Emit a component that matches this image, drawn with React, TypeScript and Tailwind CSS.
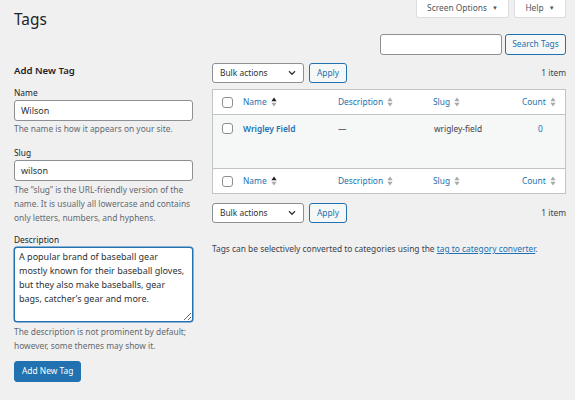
import React from 'react';

const font = "font-['Noto_Sans','Open_Sans',sans-serif]";

function SortIcon({ active }: { active?: boolean }) {
    return (
        <svg width="6" height="10" viewBox="0 0 6 10" className="ml-[4px] shrink-0">
            <path d="M3 0.5L5.6 4.2H0.4Z" fill={active ? '#1d2327' : '#a7aaad'} />
            <path d="M3 9.5L5.6 5.8H0.4Z" fill="#a7aaad" />
        </svg>
    );
}

function Checkbox() {
    return <span className="block w-[11px] h-[11px] bg-white border border-[#8c8f94] rounded-[3px]" />;
}

function BulkBar() {
    return (
        <div className="flex items-center h-[20px]">
            <div className="flex items-center justify-between w-[92px] h-[20px] pl-[7px] pr-[7px] bg-white border border-[#8c8f94] rounded-[3px] text-[#2c3338]">
                <span>Bulk actions</span>
                <svg width="8" height="6" viewBox="0 0 8 6">
                    <path d="M1 1.3L4 4.3L7 1.3" fill="none" stroke="#2c3338" strokeWidth="1.3" />
                </svg>
            </div>
            <button className="ml-[5px] h-[20px] w-[38px] bg-[#f6f7f7] border border-[#2271b1] rounded-[3px] text-[#2271b1]">
                Apply
            </button>
            <span className="ml-auto text-[#3c434a]">1 item</span>
        </div>
    );
}

function HeadRow({ footer }: { footer?: boolean }) {
    return (
        <div
            className={`grid grid-cols-[30px_95px_95px_89px_1fr] items-center h-[25px] bg-white ${
                footer ? 'border-t border-[#c3c4c7]' : 'border-b border-[#c3c4c7]'
            }`}
        >
            <div className="pl-[9px]">
                <Checkbox />
            </div>
            <div className="flex items-center text-[#2271b1]">
                Name
                <SortIcon active />
            </div>
            <div className="flex items-center text-[#2271b1]">
                Description
                <SortIcon />
            </div>
            <div className="flex items-center text-[#2271b1]">
                Slug
                <SortIcon />
            </div>
            <div className="flex items-center text-[#2271b1]">
                Count
                <SortIcon />
            </div>
        </div>
    );
}

export default function App() {
    return (
        <div className={`min-h-screen bg-[#f0f0f1] text-[#3c434a] text-[8.4px] ${font}`}>
            {/* Header */}
            <div className="flex h-[34px] pl-[14px] pr-[9px]">
                <h1 className="mt-[9px] text-[15.4px] leading-[22px] text-[#1d2327]">Tags</h1>
                <div className="ml-auto flex gap-[5px]">
                    <button className="flex items-center h-[18px] w-[93px] justify-center gap-[5px] bg-white border border-t-0 border-[#dcdcde] rounded-b-[3px] text-[#50575e]">
                        Screen Options
                        <span className="text-[6px]">▼</span>
                    </button>
                    <button className="flex items-center h-[18px] w-[52px] justify-center gap-[5px] bg-white border border-t-0 border-[#dcdcde] rounded-b-[3px] text-[#50575e]">
                        Help
                        <span className="text-[6px]">▼</span>
                    </button>
                </div>
            </div>

            <div className="flex pl-[14px] pr-[9px]">
                {/* Left column: add form */}
                <div className="w-[179px] shrink-0">
                    <h2 className="mt-[29px] text-[9.6px] leading-[16px] font-semibold text-[#1d2327]">Add New Tag</h2>

                    <label className="block mt-[7px] leading-[14px] text-[#1d2327]">Name</label>
                    <div className="h-[21px] flex items-center px-[6px] bg-white border border-[#8c8f94] rounded-[3px] text-[9px] text-[#2c3338]">
                        Wilson
                    </div>
                    <p className="mt-[1px] leading-[14px] text-[#646970]">The name is how it appears on your site.</p>

                    <label className="block mt-[10px] leading-[14px] text-[#1d2327]">Slug</label>
                    <div className="h-[21px] flex items-center px-[6px] bg-white border border-[#8c8f94] rounded-[3px] text-[9px] text-[#2c3338]">
                        wilson
                    </div>
                    <p className="mt-[2px] leading-[14px] text-[#646970]">
                        The “slug” is the URL-friendly version of the name. It is usually all lowercase and contains only
                        letters, numbers, and hyphens.
                    </p>

                    <label className="block mt-[8px] leading-[14px] text-[#1d2327]">Description</label>
                    <textarea
                        readOnly
                        className="block w-full h-[75px] px-[4px] pt-[2px] text-[9px] leading-[14px] bg-white border border-[#2271b1] shadow-[0_0_0_0.5px_#2271b1] rounded-[3px] text-[#2c3338] outline-none"
                        value={
                            'A popular brand of baseball gear\nmostly known for their baseball gloves,\nbut they also make baseballs, gear\nbags, catcher\u2019s gear and more.'
                        }
                    />
                    <p className="mt-[3px] leading-[14px] text-[#646970]">
                        The description is not prominent by default; however, some themes may show it.
                    </p>

                    <button className="mt-[8px] h-[21px] px-[7px] bg-[#2271b1] border border-[#2271b1] rounded-[3px] text-white">
                        Add New Tag
                    </button>
                </div>

                {/* Right column: list */}
                <div className="flex-1 ml-[19px]">
                    <div className="flex justify-end h-[21px]">
                        <div className="w-[122px] h-[21px] bg-white border border-[#8c8f94] rounded-[3px]" />
                        <button className="ml-[3px] w-[61px] h-[21px] bg-[#f6f7f7] border border-[#2271b1] rounded-[3px] text-[#2271b1]">
                            Search Tags
                        </button>
                    </div>

                    <div className="mt-[8px]">
                        <BulkBar />
                    </div>

                    <div className="mt-[6px] border border-[#c3c4c7] bg-white">
                        <HeadRow />
                        <div className="grid grid-cols-[30px_95px_95px_89px_1fr] items-start h-[53px] bg-[#f6f7f7]">
                            <div className="pl-[9px] pt-[8px]">
                                <Checkbox />
                            </div>
                            <div className="pt-[7px] leading-[14px] font-semibold text-[#2271b1]">Wrigley Field</div>
                            <div className="pt-[7px] leading-[14px]">—</div>
                            <div className="pt-[7px] leading-[14px] pl-[1px]">wrigley-field</div>
                            <div className="pt-[7px] leading-[14px] text-center text-[#2271b1] pr-[6px]">0</div>
                        </div>
                        <HeadRow footer />
                    </div>

                    <div className="mt-[9px]">
                        <BulkBar />
                    </div>

                    <p className="mt-[19px] leading-[14px] text-[#3c434a]">
                        Tags can be selectively converted to categories using the{' '}
                        <a className="text-[#2271b1] underline">tag to category converter</a>.
                    </p>
                </div>
            </div>
        </div>
    );
}
